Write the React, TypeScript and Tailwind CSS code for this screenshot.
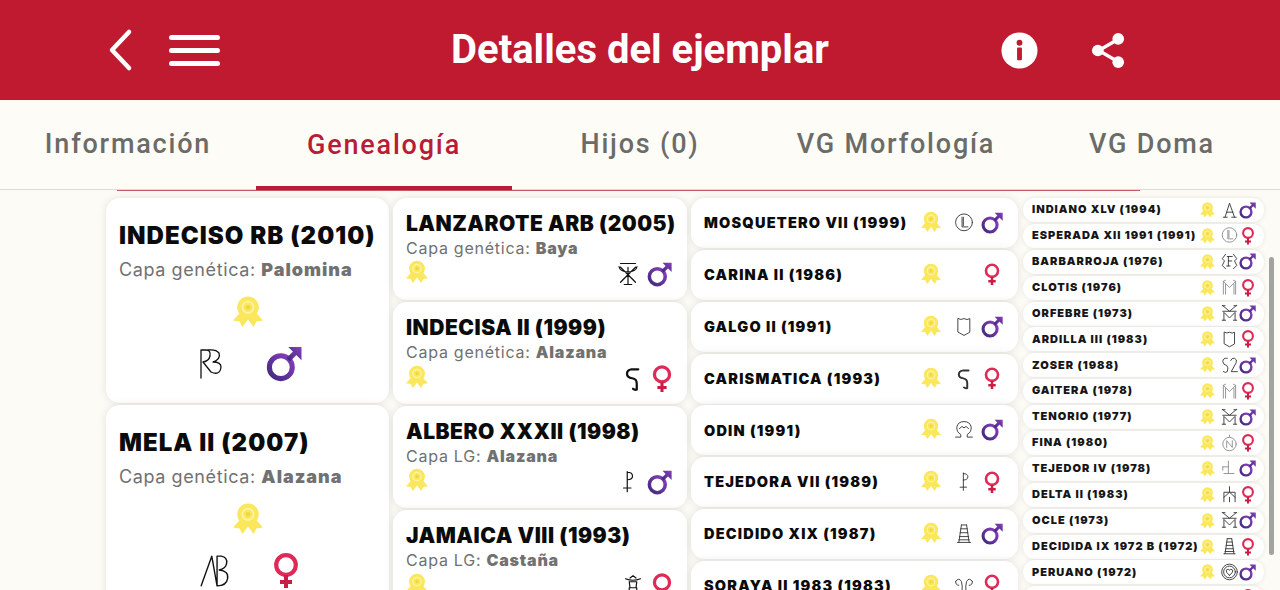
import { ReactNode } from 'react';

const stroke = { fill: 'none', stroke: 'currentColor', strokeLinecap: 'round', strokeLinejoin: 'round' } as const;

function Rosette({ className }: { className: string }) {
  return (
    <svg viewBox="0 0 32 34" className={className}>
      <path d="M10 15 L0 26 L7 27 L10 33 L16 25 L22 33 L25 27 L32 26 L22 15 Z" fill="#fbe75b" />
      <circle cx="16" cy="12" r="11.5" fill="#fbe75b" />
      <circle cx="16" cy="12" r="6" fill="none" stroke="#fdf3a8" strokeWidth="1.8" />
      <circle cx="16" cy="12" r="2.6" fill="#eed748" />
    </svg>
  );
}

function Male({ className }: { className: string }) {
  return (
    <svg viewBox="0 0 34 34" className={className}>
      <defs>
        <linearGradient id="maleGrad" x1="0" y1="1" x2="1" y2="0">
          <stop offset="0" stopColor="#3f2a7d" />
          <stop offset="1" stopColor="#8a3fc0" />
        </linearGradient>
      </defs>
      <circle cx="14" cy="20" r="10.8" fill="none" stroke="url(#maleGrad)" strokeWidth="4.8" />
      <path d="M21 13 L30 4" stroke="url(#maleGrad)" strokeWidth="4.6" fill="none" />
      <path d="M21 1 H33.5 V13.5 Z" fill="url(#maleGrad)" />
    </svg>
  );
}

function Female({ className }: { className: string }) {
  return (
    <svg viewBox="0 0 26 36" className={className}>
      <circle cx="13" cy="12" r="9.8" fill="none" stroke="#df2a57" strokeWidth="4.2" />
      <path d="M13 22 V35 M7 29 H19" stroke="#c81d45" strokeWidth="4" fill="none" />
    </svg>
  );
}

// hierros (brand marks), drawn by hand, one per horse
const marks: Record<string, ReactNode> = {
  rb: <path d="M5 31 V3 H10 Q15 3 14 9 Q13 14 7 15 L15 25 Q24 29 25 20 Q25 15 17 15 Q25 12 23 6 Q20 2 12 3" />,
  ab: <path d="M2 31 L12 3 L17 31 V3 H21 Q27 4 26 10 Q25 15 19 16 Q28 17 27 24 Q26 31 17 31" />,
  jar: <path d="M6 3 H26 M4 7 Q5 14 16 14 Q27 14 28 7 M6 8 L26 28 M26 8 L6 28 M16 8 V31 M11 31 H21" />,
  hook: <path d="M23 4 H14 Q8 5 8 10 Q8 15 15 16 Q21 17 21 23 V31 M21 31 Q18 32 16 30" strokeWidth="3" />,
  p: <path d="M15 3 V30 M10 25 H20 M15 4 Q22 4 22 9 Q22 14 15 14" />,
  tower: <path d="M6 6 Q16 10 26 6 M12 5 L16 2 L20 5 M11 10 H21 L20 18 H12 Z M11 18 H21 V30 H11 Z M11 24 H21" />,
  l: <g><circle cx="16" cy="16" r="13" /><path d="M13 8 V23 H22 M15 8 V21" /></g>,
  shield: <path d="M7 4 Q11 7 16 4 Q21 7 25 4 V25 L16 30 L7 25 Z" />,
  omega: <path d="M3 28 H11 V24 Q4 20 5 12 Q7 4 16 4 Q25 4 27 12 Q28 20 21 24 V28 H29 M9 15 Q13 9 16 14 Q19 9 23 15" />,
  ladder: <path d="M12 3 L8 30 M20 3 L24 30 M6 30 H26 M12 3 H20 M11 9 H21 M10 15 H22 M9 21 H23 M8 26 H24" />,
  horns: <path d="M3 10 Q8 3 12 10 Q14 16 13 26 M29 10 Q24 3 20 10 Q18 16 19 26 M3 10 Q3 16 8 16 M29 10 Q29 16 24 16" />,
  a: <path d="M5 29 H12 M20 29 H28 M8 29 L16 4 L25 29 M11 20 H22" />,
  bf: <g><path d="M9 4 L3 12 L7 16 L3 24 L9 30 M23 4 L29 12 L25 16 L29 24 L23 30 M12 8 H21 M14 8 V25 M11 25 H17 M14 16 H20" /></g>,
  m: <path d="M5 29 V6 L16 17 L27 6 V29 M5 6 L9 4 M27 6 L23 4 M9 29 V11 M24 29 V11" />,
  ym: <path d="M4 3 L16 13 L28 3 M8 3 H3 M29 3 H24 M6 29 V15 L16 25 L26 15 V29 M3 29 H9 M23 29 H29 M4 13 H28" />,
  s2: <path d="M12 4 Q4 3 4 10 Q5 16 11 17 Q15 20 12 28 Q9 31 5 28 M18 8 Q20 3 25 4 Q30 6 28 12 L19 28 H30" />,
  n: <g><circle cx="16" cy="18" r="12" /><path d="M11 24 V12 L21 24 V12 M16 2 V5" /></g>,
  td: <path d="M14 4 V26 M6 26 H24 M4 14 H14 M4 14 V20" />,
  delta: <path d="M16 3 V12 M6 30 V13 H26 V30 M6 22 L16 13 L26 22 M16 22 V30" />,
  heart: <g><circle cx="16" cy="16" r="14" /><circle cx="16" cy="16" r="10.5" /><path d="M16 22 Q8 16 11 12 Q14 10 16 13 Q18 10 21 12 Q24 16 16 22 Z" /></g>,
};

function Mark({ name, className, width = 1.6 }: { name?: string; className: string; width?: number }) {
  if (!name) return <span className={className} />;
  return (
    <svg viewBox="0 0 32 34" className={className} {...stroke} strokeWidth={width}>
      {marks[name]}
    </svg>
  );
}

function Big({ name, gene, value, mark, sex, markSize }: { name: string; gene: string; value: string; mark: string; sex: string; markSize: string }) {
  return (
    <div className="h-[205px] bg-white rounded-[14px] shadow-[0_0_8px_rgba(0,0,0,0.1)] px-[13px] pt-[23px] flex flex-col shrink-0">
      <div className="text-[24px] leading-[30px] font-black tracking-[1.05px] text-[#0b0b0b] whitespace-nowrap">{name}</div>
      <div className="mt-[7px] text-[18px] leading-[24px] text-[#717171] tracking-[0.6px] whitespace-nowrap">
        {gene}: <b className="font-black tracking-[1px]">{value}</b>
      </div>
      <div className="flex justify-center mt-[14px]">
        <Rosette className="w-[30px] h-[32px]" />
      </div>
      <div className="flex justify-center items-center gap-[38px] mt-[18px] text-[#111] pl-[3px]">
        <Mark name={mark} className={markSize} width={1.3} />
        {sex === 'm' ? <Male className="w-[36px] h-[36px]" /> : <Female className="w-[28px] h-[36px]" />}
      </div>
    </div>
  );
}

function Mid({ name, gene, value, mark, sex }: { name: string; gene: string; value: string; mark: string; sex: string }) {
  return (
    <div className="h-[102px] bg-white rounded-[14px] shadow-[0_0_8px_rgba(0,0,0,0.1)] pl-[13px] pr-[15px] pt-[14px] shrink-0">
      <div className="text-[21px] leading-[24px] font-black tracking-[0.5px] text-[#0b0b0b] whitespace-nowrap">{name}</div>
      <div className="text-[16px] leading-[20px] text-[#717171] tracking-[0.75px] whitespace-nowrap mt-[2px]">
        {gene}: <b className="font-black tracking-[0.8px]">{value}</b>
      </div>
      <div className="flex items-center mt-[1px]">
        <Rosette className="w-[22px] h-[24px] -mt-[2px]" />
        <div className="ml-auto flex items-center gap-[7px] text-[#111] mt-[2px]">
          <Mark name={mark} className="w-[24px] h-[26px]" />
          {sex === 'm' ? <Male className="w-[25px] h-[25px]" /> : <Female className="w-[20px] h-[28px]" />}
        </div>
      </div>
    </div>
  );
}

function Row({ name, mark, sex }: { name: string; mark?: string; sex: string }) {
  return (
    <div className="h-[50px] bg-white rounded-[14px] shadow-[0_0_8px_rgba(0,0,0,0.1)] pl-[13px] pr-[13px] flex items-center shrink-0">
      <div className="text-[14.5px] font-black tracking-[1.2px] text-[#0b0b0b] whitespace-nowrap">{name}</div>
      <div className="ml-auto flex items-center text-[#333]">
        <Rosette className="w-[20px] h-[22px] -mt-[2px]" />
        <Mark name={mark} className="w-[22px] h-[22px] ml-[12px]" width={1.4} />
        <span className="w-[26px] ml-[4px] flex justify-center">
          {sex === 'm' ? <Male className="w-[22px] h-[22px]" /> : <Female className="w-[16px] h-[23px]" />}
        </span>
      </div>
    </div>
  );
}

function Small({ name, mark, sex, faint }: { name: string; mark?: string; sex: string; faint?: boolean }) {
  return (
    <div className="h-[24px] bg-white rounded-full shadow-[0_0_5px_rgba(0,0,0,0.09)] pl-[9px] pr-[8px] flex items-center shrink-0">
      <div className="text-[11px] font-black tracking-[1px] text-[#161616] whitespace-nowrap -mt-[1px]">{name}</div>
      <div className="ml-auto flex items-center">
        <Rosette className="w-[15px] h-[16px]" />
        <span className={faint ? 'text-[#8a8a8a]' : 'text-[#333]'}>
          <Mark name={mark} className="block w-[19px] h-[19px] ml-[5px]" width={1.6} />
        </span>
        {sex === 'm' ? <Male className="w-[17px] h-[17px]" /> : <Female className="w-[14px] h-[18px] mx-[1.5px]" />}
      </div>
    </div>
  );
}

const rows = [
  { name: 'MOSQUETERO VII (1999)', mark: 'l', sex: 'm' },
  { name: 'CARINA II (1986)', sex: 'f' },
  { name: 'GALGO II (1991)', mark: 'shield', sex: 'm' },
  { name: 'CARISMATICA (1993)', mark: 'hook', sex: 'f' },
  { name: 'ODIN (1991)', mark: 'omega', sex: 'm' },
  { name: 'TEJEDORA VII (1989)', mark: 'p', sex: 'f' },
  { name: 'DECIDIDO XIX (1987)', mark: 'ladder', sex: 'm' },
  { name: 'SORAYA II 1983 (1983)', mark: 'horns', sex: 'f' },
];

const smalls = [
  { name: 'INDIANO XLV (1994)', mark: 'a', sex: 'm' },
  { name: 'ESPERADA XII 1991 (1991)', mark: 'l', sex: 'f', faint: true },
  { name: 'BARBARROJA (1976)', mark: 'bf', sex: 'm' },
  { name: 'CLOTIS (1976)', mark: 'm', sex: 'f', faint: true },
  { name: 'ORFEBRE (1973)', mark: 'ym', sex: 'm' },
  { name: 'ARDILLA III (1983)', mark: 'shield', sex: 'f' },
  { name: 'ZOSER (1988)', mark: 's2', sex: 'm' },
  { name: 'GAITERA (1978)', mark: 'm', sex: 'f', faint: true },
  { name: 'TENORIO (1977)', mark: 'ym', sex: 'm' },
  { name: 'FINA (1980)', mark: 'n', sex: 'f', faint: true },
  { name: 'TEJEDOR IV (1978)', mark: 'td', sex: 'm', faint: true },
  { name: 'DELTA II (1983)', mark: 'delta', sex: 'f' },
  { name: 'OCLE (1973)', mark: 'ym', sex: 'm' },
  { name: 'DECIDIDA IX 1972 B (1972)', mark: 'ladder', sex: 'f' },
  { name: 'PERUANO (1972)', mark: 'heart', sex: 'm' },
  { name: 'SOLERA (1972)', mark: 'm', sex: 'f' },
];

const tabs = ['Información', 'Genealogía', 'Hijos (0)', 'VG Morfología', 'VG Doma'];

export default function App() {
  return (
    <div className="h-screen overflow-hidden flex flex-col bg-[#fdfbf6] font-['Inter',sans-serif]">
      <header className="h-[100px] shrink-0 bg-[#c01a30] flex items-center text-white px-[106px]">
        <div className="flex-1 flex items-center">
          <svg viewBox="0 0 28 44" className="w-[28px] h-[44px]" {...stroke} stroke="white" strokeWidth="4.5">
            <path d="M23 4 L6 22 L23 40" />
          </svg>
          <div className="ml-[35px] w-[51px] flex flex-col gap-[8.5px] mt-[1px]">
            <div className="h-[4.5px] bg-white rounded-full" />
            <div className="h-[4.5px] bg-white rounded-full" />
            <div className="h-[4.5px] bg-white rounded-full" />
          </div>
        </div>
        <h1 className="font-['Roboto',sans-serif] font-bold text-[40px] whitespace-nowrap">Detalles del ejemplar</h1>
        <div className="flex-1 flex justify-end">
          <div className="flex items-center mr-[48px] gap-[53px]">
            <svg viewBox="0 0 38 38" className="w-[37px] h-[37px]">
              <circle cx="19" cy="19" r="18.5" fill="white" />
              <rect x="16.5" y="16" width="5" height="13" rx="1" fill="#c01a30" />
              <circle cx="19" cy="11" r="3" fill="#c01a30" />
            </svg>
            <svg viewBox="0 0 36 38" className="w-[35px] h-[37px]">
              <path d="M27 8 L8 19 L27 30" fill="none" stroke="white" strokeWidth="3.5" />
              <circle cx="28" cy="7" r="6" fill="white" />
              <circle cx="7" cy="19" r="6" fill="white" />
              <circle cx="28" cy="31" r="6" fill="white" />
            </svg>
          </div>
        </div>
      </header>

      <nav className="h-[90px] shrink-0 bg-[#fefcf6] border-b border-[#dedbd5] flex font-['Roboto',sans-serif] text-[27px] font-medium tracking-[1.8px] text-[#6b6b68]">
        {tabs.map((tab) => (
          <div
            key={tab}
            className={
              tab === 'Genealogía'
                ? 'flex-1 flex items-center justify-center text-[#b91c36] border-b-[4px] border-[#b91c36] -mb-[1px] pt-[4px]'
                : 'flex-1 flex items-center justify-center pb-[1px] whitespace-nowrap'
            }
          >
            {tab}
          </div>
        ))}
      </nav>

      <main className="flex-1 min-h-0 overflow-hidden relative pl-[106px]">
        <div className="absolute left-[117px] right-[140px] top-0 h-[1px] bg-[#c45a66] z-10" />
        <div className="flex items-start pt-[8px]">
          <div className="w-[283px] flex flex-col gap-[2px] shrink-0 mr-[4px]">
            <Big name="INDECISO RB (2010)" gene="Capa genética" value="Palomina" mark="rb" sex="m" markSize="w-[32px] h-[34px]" />
            <Big name="MELA II (2007)" gene="Capa genética" value="Alazana" mark="ab" sex="f" markSize="w-[36px] h-[36px]" />
          </div>
          <div className="w-[294px] flex flex-col gap-[2px] shrink-0 mr-[4px]">
            <Mid name="LANZAROTE ARB (2005)" gene="Capa genética" value="Baya" mark="jar" sex="m" />
            <Mid name="INDECISA II (1999)" gene="Capa genética" value="Alazana" mark="hook" sex="f" />
            <Mid name="ALBERO XXXII (1998)" gene="Capa LG" value="Alazana" mark="p" sex="m" />
            <Mid name="JAMAICA VIII (1993)" gene="Capa LG" value="Castaña" mark="tower" sex="f" />
          </div>
          <div className="w-[327px] flex flex-col gap-[1.85px] shrink-0 mr-[5px]">
            {rows.map((r) => (
              <Row key={r.name} {...r} />
            ))}
          </div>
          <div className="w-[241px] flex flex-col gap-[1.9px] shrink-0">
            {smalls.map((s) => (
              <Small key={s.name} {...s} />
            ))}
          </div>
        </div>
        <div className="absolute right-[6px] top-[67px] bottom-[35px] w-[5px] rounded-full bg-[#a3a3a0]" />
      </main>
    </div>
  );
}
